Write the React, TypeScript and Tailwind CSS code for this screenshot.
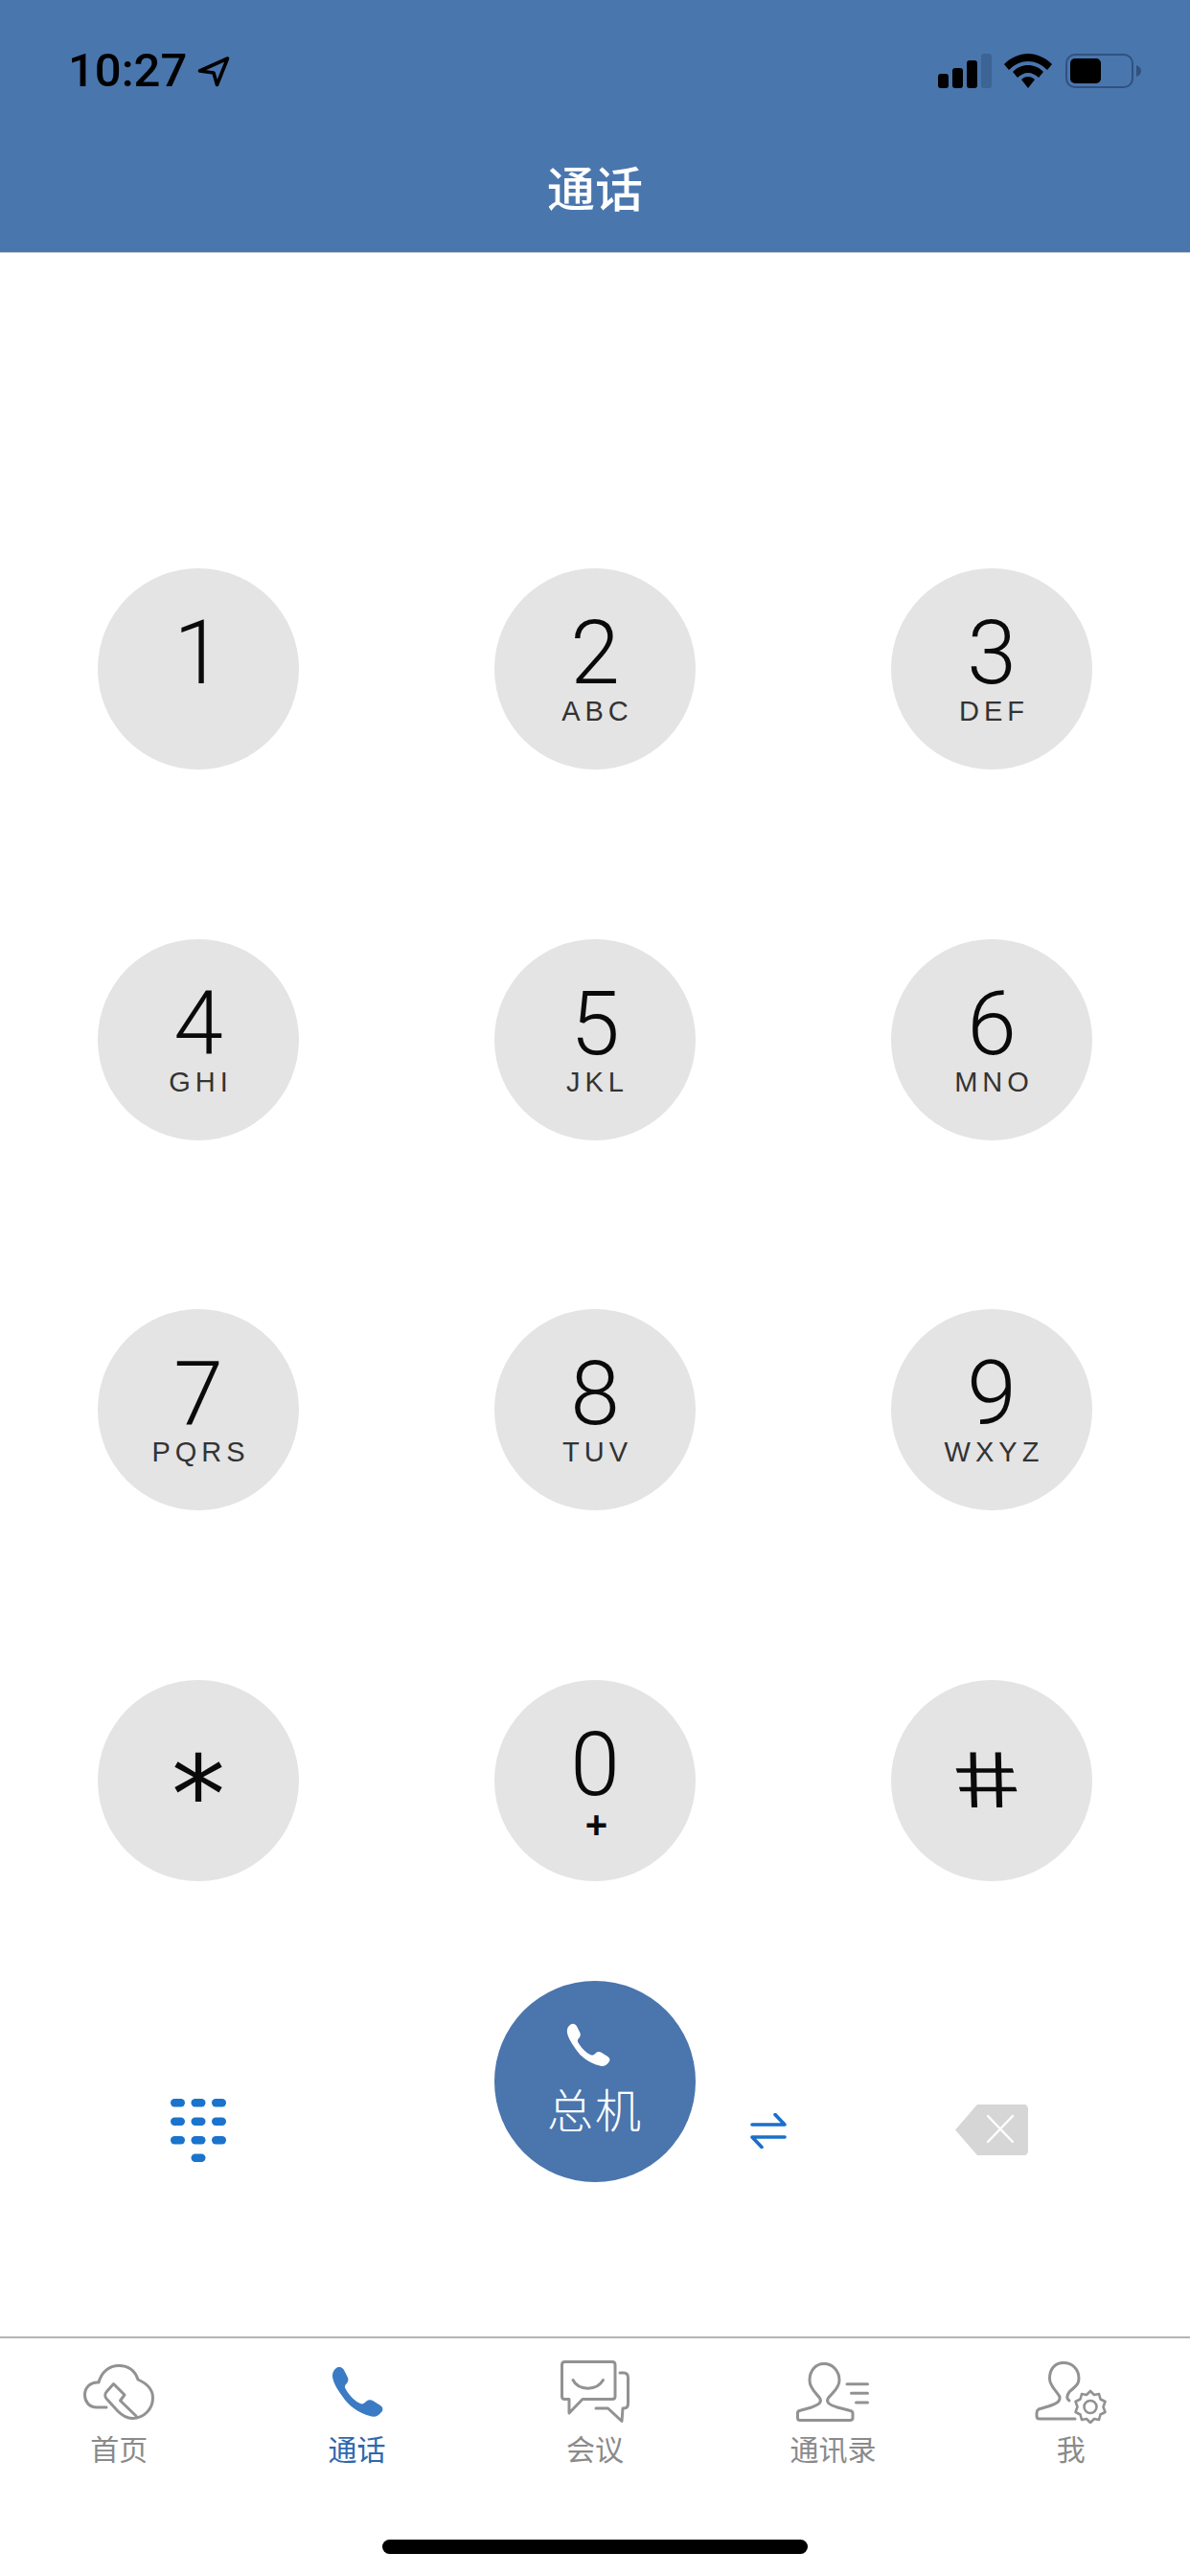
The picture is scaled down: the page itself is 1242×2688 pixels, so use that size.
const keys: [string, string][] = [
  ["1", ""], ["2", "ABC"], ["3", "DEF"],
  ["4", "GHI"], ["5", "JKL"], ["6", "MNO"],
  ["7", "PQRS"], ["8", "TUV"], ["9", "WXYZ"],
];
const sans = "[font-family:'Liberation_Sans',sans-serif]";

function Key({ d, l }: { d: string; l: string }) {
  return (
    <div className="flex justify-center">
      <div className="w-[210px] h-[210px] rounded-full bg-[#e4e4e4] flex flex-col items-center pt-[43px]">
        <div className="text-[93px] leading-[92px] font-[350] text-[#0a0a0a] [font-family:Roboto,sans-serif]">{d}</div>
        <div className="text-[29px] leading-[28px] tracking-[5px] pl-[5px] text-[#333333] [font-family:'Liberation_Sans',sans-serif]">{l}</div>
      </div>
    </div>
  );
}

function Handset({ className }: { className: string }) {
  return (
    <svg viewBox="0 0 54 52" className={className} fill="currentColor">
      <path d="M5 1C8 -1 11 0 13 3L17 11C18 14 17 16 15 18C13 20 14 22 16 25C20 31 25 36 30 38C32 39 34 38 36 36C38 34 41 34 43 35L51 40C54 42 54 45 52 47C49 51 45 53 40 51C29 48 18 41 11 30C5 22 1 14 1 9C1 6 2 3 5 1Z" />
    </svg>
  );
}

const tabs = [
  { label: "首页", active: false, icon: (
    <svg width="74" height="58" viewBox="0 0 74 58" fill="none" stroke="#929292" strokeWidth="3" strokeLinecap="round" strokeLinejoin="round">
      <path d="M24 45H14C6 45 1.5 39 1.5 32C1.5 24 8 18 16 19C19 8 27 1.5 37 1.5C47 1.5 54 7 57 16C66 20 72.5 26 72.5 35C72.5 47 63 56.5 51 56.5C45 56.5 40 53 36 49L26 38C22 35 22 31 24 29L31.5 20.5L43 32L38.5 38L55 54" />
    </svg>
  ) },
  { label: "通话", active: true, icon: <Handset className="w-[54px] h-[52px] text-[#3a7bc4]" /> },
  { label: "会议", active: false, icon: (
    <svg width="72" height="66" viewBox="0 0 72 66" fill="none" stroke="#929292" strokeWidth="3" strokeLinecap="round" strokeLinejoin="round">
      <path d="M4.5 1.5H54C56 1.5 57 2.5 57 4.5V37.5C57 39.5 56 40.5 54 40.5H23L9 55V40.5H4.5C2.5 40.5 1.5 39.5 1.5 37.5V4.5C1.5 2.5 2.5 1.5 4.5 1.5Z" />
      <path d="M13 20.5C19 32 38 32 44.5 20.5" />
      <path d="M62 13H66C69 13 70.5 15 70.5 18V45C70.5 48 69 50 66 50H65L64 63.5L49.5 50H37" />
    </svg>
  ) },
  { label: "通讯录", active: false, icon: (
    <svg width="76" height="62" viewBox="0 0 76 62" fill="none" stroke="#929292" strokeWidth="3" strokeLinecap="round" strokeLinejoin="round">
      <path d="M29 1.5C20 1.5 14 9 14 19C14 28 22 33 25 38C27 43 21 45 16 47L3.5 50.5C2 51 1.5 52 1.5 53V58C1.5 59.5 2.5 60.5 4 60.5H56C58 60.5 59 59.5 59 58V53C59 52 58 51 56.5 50.5L43 47C37 45 31 43 33 38C36 33 45 28 45 19C45 9 38 1.5 29 1.5Z" />
      <path d="M53 22.7H74.5M57.5 32.3H74.5M62.5 42H74.5" />
    </svg>
  ) },
  { label: "我", active: false, icon: (
    <svg width="76" height="65" viewBox="0 0 76 65" fill="none" stroke="#929292" strokeWidth="3" strokeLinecap="round" strokeLinejoin="round">
      <path d="M36 41C33 39 33 36 36 32C41 27 46 25 46 18C46 8 39 1.5 30 1.5C21 1.5 15.5 8 15.5 18C15.5 26 23 31 26 37C27 43 20 45 14 47L4 50C2.5 51 2 52 2 54V57C2 59 3 60 5 60H42" />
      <path d="M58 31L62 35L67 34L68.5 39.5L73.5 42L71.5 47.5L73.5 53L68.5 55.5L67 61L62 60L58 64L54 60L49 61L47.5 55.5L42.5 53L44.5 47.5L42.5 42L47.5 39.5L49 34L54 35Z" strokeWidth="2.6" />
      <circle cx="58" cy="47.5" r="6.5" strokeWidth="2.6" />
    </svg>
  ) },
];

export default function App() {
  return (
    <div className={`w-[1242px] h-[2688px] bg-white flex flex-col overflow-hidden ${sans}`}>
      <header className="h-[264px] shrink-0 bg-[#4a76ae] border-b border-[#c4c8ce] flex flex-col">
        <div className="h-[166px] flex items-start justify-between pl-[71px] pr-[51px] pt-[47px]">
          <div className="flex items-start gap-[11px]">
            <span className="text-[49px] leading-[54px] font-medium text-black [font-family:Roboto,sans-serif]">10:27</span>
            <svg width="34" height="32" viewBox="0 0 34 32" className="mt-[12px]">
              <path d="M31.5 2L2.5 15L17 17L20.5 29.5Z" fill="none" stroke="#000" strokeWidth="3.6" strokeLinejoin="round" />
            </svg>
          </div>
          <div className="flex items-start pt-[9px]">
            <svg width="56" height="36" viewBox="0 0 56 36" className="mr-[13px]">
              <rect x="0" y="21" width="11" height="15" rx="3" fill="#000" />
              <rect x="15" y="15" width="11" height="21" rx="3" fill="#000" />
              <rect x="30" y="7" width="11" height="29" rx="3" fill="#000" />
              <rect x="45" y="0" width="11" height="36" rx="3" fill="#3c6494" />
            </svg>
            <svg width="50" height="36" viewBox="0 0 50 36" className="mr-[14px]">
              <path d="M25 0C34 0 43 4 50 11L45 17C39 11 32 8 25 8C18 8 11 11 5 17L0 11C7 4 16 0 25 0Z" fill="#000" />
              <path d="M25 12C31 12 36 14 41 19L36 25C33 22 29 20 25 20C21 20 17 22 14 25L9 19C14 14 19 12 25 12Z" fill="#000" />
              <path d="M25 24C28 24 30 25 32 27L25 36L18 27C20 25 22 24 25 24Z" fill="#000" />
            </svg>
            <svg width="79" height="36" viewBox="0 0 79 36">
              <rect x="1" y="1" width="69" height="34" rx="9" fill="none" stroke="#2f527f" strokeWidth="2" />
              <rect x="5" y="5" width="32" height="26" rx="5" fill="#000" />
              <path d="M74 12C77 13 79 15 79 18C79 21 77 23 74 24Z" fill="#2f527f" />
            </svg>
          </div>
        </div>
        <div className="text-center text-white text-[50px] leading-[56px] font-medium [font-family:'Noto_Sans_CJK_SC',sans-serif]">通话</div>
      </header>

      <main className="flex-1 flex flex-col pt-[329px]">
        <div className="grid grid-cols-3 gap-y-[176.7px]">
          {keys.map(([d, l]) => <Key key={d} d={d} l={l} />)}
          <div className="flex justify-center">
            <div className="w-[210px] h-[210px] rounded-full bg-[#e4e4e4] flex justify-center pt-[64px] overflow-hidden">
              <span className="text-[112px] leading-[112px] text-[#0a0a0a] [font-family:'DejaVu_Sans',sans-serif]">*</span>
            </div>
          </div>
          <div className="flex justify-center">
            <div className="w-[210px] h-[210px] rounded-full bg-[#e4e4e4] flex flex-col items-center pt-[43px]">
              <div className="text-[93px] leading-[92px] font-[350] text-[#0a0a0a] [font-family:Roboto,sans-serif]">0</div>
              <div className="text-[40px] leading-[38px] -mt-[3px] font-bold pl-[3px] text-[#0a0a0a] [font-family:'Liberation_Sans',sans-serif]">+</div>
            </div>
          </div>
          <div className="flex justify-center">
            <div className="w-[210px] h-[210px] rounded-full bg-[#e4e4e4] flex justify-center pt-[62px] pl-[8px]">
              <span className="text-[84px] leading-[84px] text-[#0a0a0a] skew-x-[13deg] scale-x-[1.35]">#</span>
            </div>
          </div>
        </div>

        <div className="flex mt-[104px]">
          <div className="w-[414px] flex justify-center pt-[123px]">
            <svg width="60" height="66" viewBox="0 0 60 66" fill="#1a73cc">
              {[0, 19.5, 39].map((y) => [0, 21.5, 43].map((x) => (
                <rect key={`${x}-${y}`} x={x + 1} y={y} width="15" height="8.5" rx="4.2" />
              )))}
              <rect x="22.5" y="57.5" width="15" height="8.5" rx="4.2" />
            </svg>
          </div>
          <div className="w-[312px] pl-[102px]">
            <div className="w-[210px] h-[210px] rounded-full bg-[#4a75ad] flex flex-col items-center pt-[44px] text-white">
              <Handset className="w-[46px] h-[46px] text-white mr-[14px]" />
              <div className="text-[48px] leading-[54px] mt-[15px] tracking-[2px] [font-family:'Noto_Sans_CJK_SC',sans-serif] font-light">总机</div>
            </div>
          </div>
          <div className="w-[102px] pl-[57px] pt-[138px]">
            <svg width="38" height="37" viewBox="0 0 38 37" fill="none" stroke="#1a6fc9" strokeWidth="3.6" strokeLinecap="round" strokeLinejoin="round" className="block">
              <path d="M2 12H36L26 1.5" />
              <path d="M36 25H2L12 35.5" />
            </svg>
          </div>
          <div className="w-[414px] flex justify-center pt-[129px]">
            <svg width="76" height="53" viewBox="0 0 76 53">
              <path d="M23 0H72C74 0 76 2 76 4V49C76 51 74 53 72 53H23L0 26.5Z" fill="#d6d6d6" />
              <path d="M34 12L60 39M60 12L34 39" stroke="#fff" strokeWidth="2.4" strokeLinecap="round" />
            </svg>
          </div>
        </div>
      </main>

      <footer className="h-[250px] shrink-0 border-t-2 border-[#b4b4b4] flex flex-col items-center pt-[23px] [font-family:'Noto_Sans_CJK_SC',sans-serif]">
        <div className="w-full grid grid-cols-5">
          {tabs.map((t) => (
            <div key={t.label} className="flex flex-col items-center">
              <div className="h-[66px] flex items-center justify-center">{t.icon}</div>
              <div className={`mt-[5px] text-[30px] leading-[40px] ${t.active ? "text-[#2f68ad]" : "text-[#8a8a8a]"}`}>{t.label}</div>
            </div>
          ))}
        </div>
        <div className="w-[444px] h-[15px] rounded-full bg-black mt-[76px]" />
      </footer>
    </div>
  );
}
